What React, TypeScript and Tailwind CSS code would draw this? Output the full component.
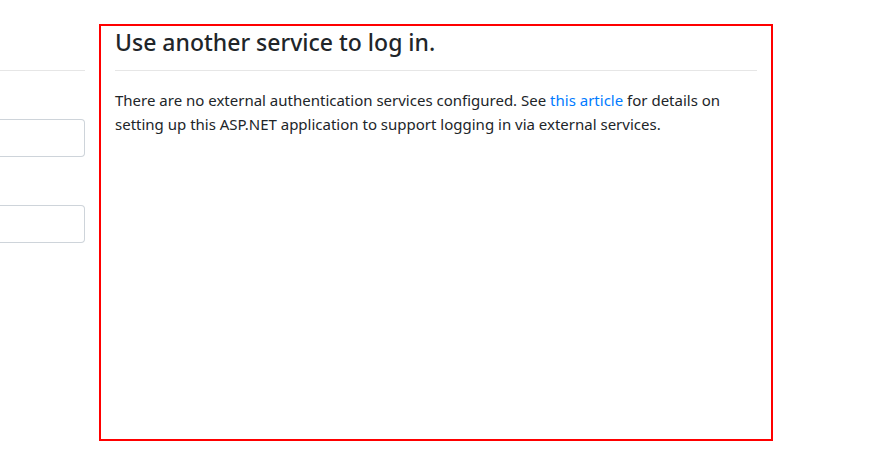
export default function App() {
  return (
    <div
      className="flex items-start w-[872px] h-[466px] bg-white text-[#212529] overflow-hidden"
      style={{ fontFamily: '"Noto Sans", "Open Sans", sans-serif' }}
    >
      {/* local account column, cut off at the left edge */}
      <div className="w-[85px] shrink-0 mr-[14px]">
        <hr className="mt-[70px] border-0 border-t border-[#e6e6e6]" />
        <div className="mt-[48px] h-[38px] border border-l-0 border-[#ced4da] rounded-r-[4px]" />
        <div className="mt-[48px] h-[38px] border border-l-0 border-[#ced4da] rounded-r-[4px]" />
      </div>

      {/* external login column */}
      <section className="mt-[24px] w-[674px] h-[417px] shrink-0 border-2 border-[#ff0000] px-[14px]">
        <h4 className="mt-[2px] text-[23px] leading-[28px] font-medium">
          Use another service to log in.
        </h4>
        <hr className="mt-[14px] border-0 border-t border-[#e6e6e6]" />
        <p className="mt-[17px] text-[15px] leading-[24px]">
          There are no external authentication services configured. See{" "}
          <a href="#" className="text-[#007bff]">
            this article
          </a>{" "}
          for details on setting up this ASP.NET application to support logging
          in via external services.
        </p>
      </section>
    </div>
  );
}
